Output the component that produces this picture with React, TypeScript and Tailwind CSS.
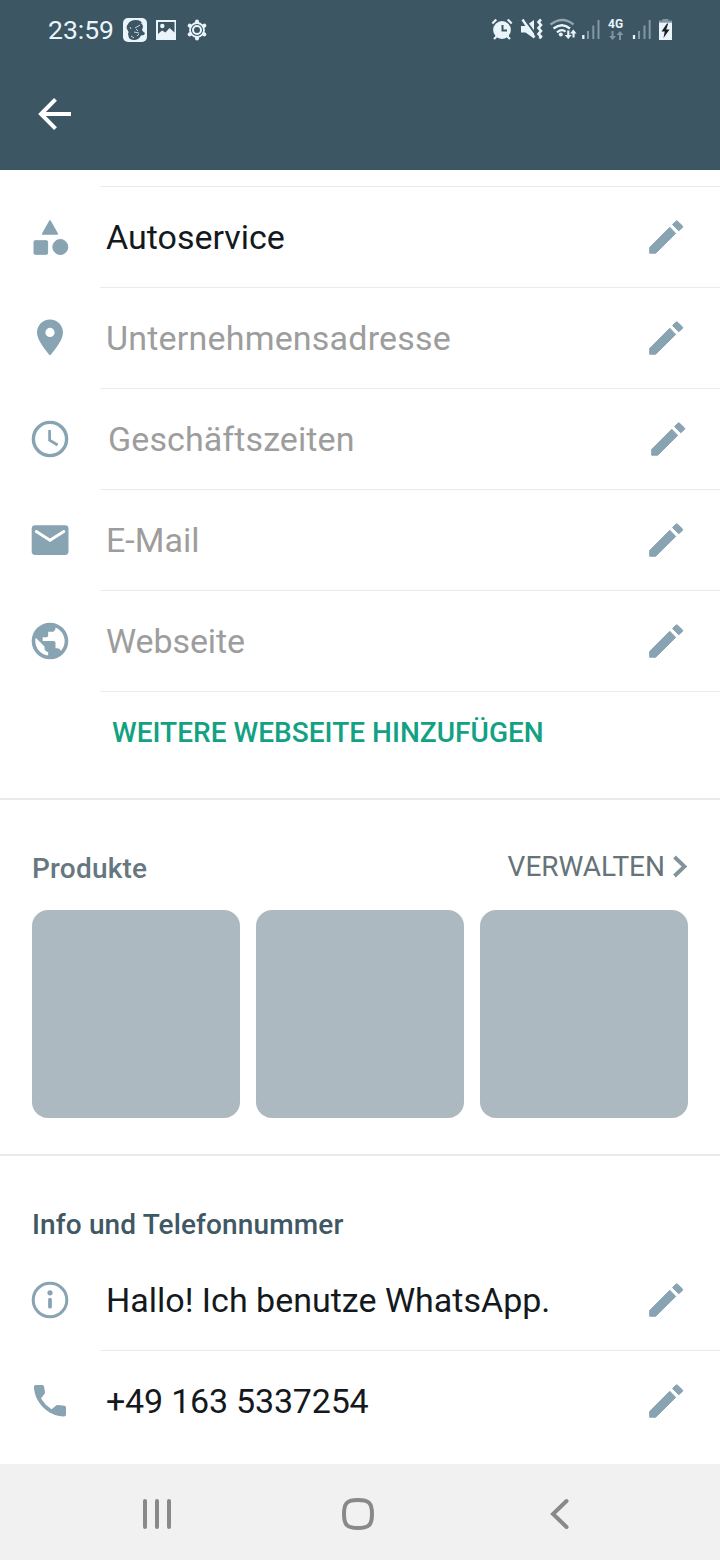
import type { ReactNode } from 'react'
import { MdPublic } from 'react-icons/md'

const ICON = 'text-[#88a3b2]'

function Pencil() {
  return (
    <svg width="40" height="40" viewBox="0 0 40 40" className={ICON} fill="currentColor" stroke="currentColor" strokeLinejoin="round">
      <path d="M3.7 30.5v5.7h6L29.7 16.4l-5.9-6.1z" />
      <path d="M26.6 7.6l3.2-3.3q.9-.9 1.8 0l4.7 4.5q.9.9 0 1.8l-3.6 3.2z" />
    </svg>
  )
}

function CategoryIcon() {
  return (
    <svg width="40" height="40" viewBox="0 0 40 40" className={ICON} fill="currentColor" stroke="currentColor" strokeLinejoin="round">
      <path d="M20 4l7.3 13H12.7z" strokeWidth="1.6" />
      <rect x="4" y="23.7" width="13.6" height="13.6" rx="1" />
      <circle cx="30.3" cy="30" r="7.5" />
    </svg>
  )
}

function PinIcon() {
  return (
    <svg width="40" height="40" viewBox="0 1 40 40" className={ICON} fill="currentColor">
      <path
        fillRule="evenodd"
        d="M20 2.4C12.7 2.4 7 8.1 7 15.4 7 23.5 15.8 33 18.8 37.2q1.2 1.7 2.4 0C24.2 33 33 23.5 33 15.4 33 8.1 27.3 2.4 20 2.4zm0 8.4a4.6 4.6 0 1 1 0 9.2 4.6 4.6 0 0 1 0-9.2z"
      />
    </svg>
  )
}

function ClockIcon() {
  return (
    <svg width="40" height="40" viewBox="0 0 40 40" className={ICON} fill="none" stroke="currentColor">
      <circle cx="20" cy="20" r="16.6" strokeWidth="3.4" />
      <path d="M19.6 11v10.2l8 4.8" strokeWidth="2.7" />
    </svg>
  )
}

function MailIcon() {
  return (
    <svg width="40" height="40" viewBox="0 0 40 40" className={ICON}>
      <rect x="1.7" y="5.3" width="36.8" height="29.6" rx="3.4" fill="currentColor" />
      <path d="M6.3 11.6L20 20.2l13.8-8.6" fill="none" stroke="#fff" strokeWidth="3" strokeLinecap="round" />
    </svg>
  )
}

function InfoIcon() {
  return (
    <svg width="40" height="40" viewBox="0 0 40 40" className={ICON} fill="none" stroke="currentColor">
      <circle cx="20" cy="20" r="16.8" strokeWidth="3" />
      <circle cx="20" cy="12.8" r="2.6" fill="currentColor" stroke="none" />
      <path d="M20 19.7v7" strokeWidth="3.8" strokeLinecap="round" />
    </svg>
  )
}

function PhoneIcon() {
  return (
    <svg width="40" height="40" viewBox="0 0 40 40" className={ICON} fill="currentColor">
      <path d="M5.8 4h6.5q1.6 0 1.8 1.8.5 3.8.9 5.1.2 1.2-.8 2.3l-3.3 4.2q4.3 6.7 10.7 10.8l4.2-3.5q.9-.9 2.3-.7l6.200.8q1.700.3 1.700 1.800v7q0 2-2 2C17.500 35.500 4 20 4 5.800 4 4 5.800 4 5.800 4z" />
    </svg>
  )
}

type RowProps = {
  icon: ReactNode
  label: string
  filled?: boolean
  shifted?: boolean
  border?: boolean
  tracking?: string
}

function Row({ icon, label, filled, shifted, border = true, tracking = '' }: RowProps) {
  return (
    <div className="flex h-[101px]">
      <div className="flex w-[100px] items-center justify-center">{icon}</div>
      <div
        className={`flex flex-1 items-center justify-between border-t ${border ? 'border-[#e9ebec]' : 'border-transparent'} ${
          shifted ? 'pl-2 pr-8' : 'pl-1.5 pr-[34px]'
        }`}
      >
        <span className={`whitespace-nowrap text-[34px] leading-10 ${filled ? 'text-[#13191d]' : 'text-[#9d9d9d]'} ${tracking}`}>
          {label}
        </span>
        <Pencil />
      </div>
    </div>
  )
}

function StatusBar() {
  return (
    <div className="flex h-[60px] items-center justify-between pl-12 pr-[46px] text-[#e9f5fb]">
      <div className="flex items-center">
        <span className="w-[75px] text-[26.5px] leading-[60px]">23:59</span>
        {/* chat head notification */}
        <svg width="24" height="24" viewBox="0 0 24 24" fill="currentColor">
          <rect width="24" height="24" rx="5" />
          <path
            d="M5 6q2-4 8-4 5 0 6.500 4l.5 3-1 3 1.500 2 1.500 1-1 2-3 .5q-2 4-6 4.500-4 .5-6-2l-1-4q1.500-2-.5-4-2-3 .5-6z"
            fill="#3c5664"
          />
          <path d="M12 10l5-3M11 14l5 1M8 18l3 2M13 11l2 2M18 5l2 2M7 9l1 2M14 18l2-2" stroke="currentColor" strokeWidth="1" opacity="0.8" />
        </svg>
        <svg width="20" height="20" viewBox="0 0 20 20" className="ml-[9px]" fill="currentColor">
          <path fillRule="evenodd" d="M0 0h20.5v20H0zM2 2v12l4-3.5 3.5 2 4-4.5 5 4.500V2z" />
          <circle cx="6.3" cy="6" r="2.2" />
        </svg>
        <svg width="20" height="22" viewBox="-10 -11 20 22" className="ml-[11px]" fill="none" stroke="currentColor">
          <circle r="7" strokeWidth="1.8" />
          <circle r="4" strokeWidth="2" />
          <g strokeWidth="4" strokeLinecap="round">
            <path d="M0-8.4v.4M0 8.4v-.4M7.3-4.4l-.3.2M7.3 4.4l-.3-.2M-7.3-4.4l.3.2M-7.3 4.4l.3-.2" />
          </g>
        </svg>
      </div>

      <svg width="184" height="30" viewBox="490 15 184 30">
        {/* alarm */}
        <circle cx="502" cy="30" r="8.9" fill="currentColor" />
        <path d="M492.3 23.5l4-4M511.7 23.5l-4-4M496.5 36.5l-2.5 2.5M507.5 36.5l2.5 2.5" stroke="currentColor" strokeWidth="2.2" />
        <path d="M502.5 25v5.5h4.5" fill="none" stroke="#3c5664" strokeWidth="2" />
        {/* muted, vibrating */}
        <path d="M521 26h4.5l8.5-6v18.5l-8.5-6H521z" fill="currentColor" />
        <path d="M524.5 19l11 15" stroke="#3c5664" strokeWidth="2" />
        <path d="M522.5 19.5l12 18" stroke="currentColor" strokeWidth="2.4" />
        <path d="M541 19.5l-2.5 2.5 2.5 3-2.5 3 2.5 3-2.5 3 2.5 2.5-1.5 2" fill="none" stroke="currentColor" strokeWidth="2.6" />
        {/* wifi */}
        <g fill="none" strokeWidth="2.3">
          <path d="M550.5 24.5q12-9 23 0" stroke="#93a4ae" />
          <path d="M553.5 28.5q8.5-6.5 16.5 0M557 32.3q5-4 8.5-.5" stroke="currentColor" />
        </g>
        <circle cx="560.8" cy="34.5" r="2" fill="currentColor" />
        <path d="M567.2 30.5v4.5h-2.5l3.5 4 3.5-4h-2.3v-4.5zM572.5 37.5v-4H570l3.3-4 3.3 4h-2v4z" fill="currentColor" />
        {/* signal, sim 1 */}
        <path d="M583.3 35v4" stroke="currentColor" strokeWidth="2.3" />
        <path d="M588 31v8M593.3 25.5V39M598.5 20v19" stroke="#8497a2" strokeWidth="2" />
        <text x="608" y="28" fontSize="12" fontWeight="700" fill="currentColor" letterSpacing="0.2">
          4G
        </text>
        <path d="M611.5 31v5H609l3.5 4 3.5-4h-2.5v-5zM619 40v-5h-2.5l3.5-4 3.5 4H621v5z" fill="#8195a0" />
        {/* signal, sim 2 */}
        <path d="M634 35v4" stroke="currentColor" strokeWidth="2.3" />
        <path d="M639 31v8M644.5 25.5V39M649.7 20v19" stroke="#8497a2" strokeWidth="2" />
        {/* battery */}
        <path d="M659 22.5v-2h3.5v-1.5h6v1.5h3.5v2z" fill="#8497a2" />
        <path d="M659 22.5h13V40h-13z" fill="currentColor" />
        <path d="M667 23.5l-5.5 8h3.2l-1.2 6.5 6-8.5h-3.3l2-6z" fill="#172026" />
      </svg>
    </div>
  )
}

function NavBar() {
  return (
    <nav className="h-24 bg-[#f1f1f1]">
      <svg width="720" height="96" viewBox="0 1464 720 96" fill="none" stroke="#898989" strokeWidth="4" strokeLinecap="round">
        <path d="M145 1501v26M157 1501v26M169 1501v26" />
        <path d="M358 1500c11 0 14 3 14 14s-3 14-14 14-14-3-14-14 3-14 14-14z" />
        <path d="M566.5 1501l-13.5 13 13.5 13" />
      </svg>
    </nav>
  )
}

const details: RowProps[] = [
  { icon: <CategoryIcon />, label: 'Autoservice', filled: true },
  { icon: <PinIcon />, label: 'Unternehmensadresse', tracking: 'tracking-[0.2px]' },
  { icon: <ClockIcon />, label: 'Geschäftszeiten', shifted: true, tracking: 'tracking-[0.1px]' },
  { icon: <MailIcon />, label: 'E-Mail' },
  { icon: <MdPublic size={44} className={ICON} />, label: 'Webseite', tracking: 'tracking-[-0.1px]' },
]

export default function App() {
  return (
    <div className="flex h-[1560px] w-[720px] flex-col overflow-hidden bg-white font-[Roboto,sans-serif]">
      <header className="h-[170px] bg-[#3c5664]">
        <StatusBar />
        <div className="flex h-[108px] items-center pl-[38px]">
          <svg width="34" height="34" viewBox="0 0 34 34" fill="none" stroke="#fff" strokeWidth="4">
            <path d="M33 17H3M17.5 2.3L3 17l14.5 14.7" />
          </svg>
        </div>
      </header>

      <section className="h-[630px] border-b-2 border-[#e8ebed] pt-4">
        {details.map(row => (
          <Row key={row.label} {...row} />
        ))}
        <div className="ml-[100px] border-t border-[#e9ebec] pl-3 pt-[21px]">
          <button className="block whitespace-nowrap text-[28px] font-medium leading-10 tracking-[0.03px] text-[#12a183]">
            WEITERE WEBSEITE HINZUFÜGEN
          </button>
        </div>
      </section>

      <section className="h-[356px] border-b-2 border-[#e8ebed] px-8">
        <div className="flex h-[110px] items-end justify-between pb-[21px]">
          <h2 className="text-[28px] font-medium leading-10 tracking-[0.2px] text-[#667781]">Produkte</h2>
          <button className="mb-0.5 flex items-center gap-[7px] text-[28px] leading-10 text-[#667378]">
            VERWALTEN
            <svg width="16" height="24" viewBox="0 0 16 24" fill="none" stroke="#81929d" strokeWidth="3.8">
              <path d="M2.5 2L12.5 11.5l-10 9.5" />
            </svg>
          </button>
        </div>
        <div className="grid grid-cols-3 gap-4">
          <div className="h-52 rounded-2xl bg-[#adb9c1]" />
          <div className="h-52 rounded-2xl bg-[#adb9c1]" />
          <div className="h-52 rounded-2xl bg-[#adb9c1]" />
        </div>
      </section>

      <section className="flex-1 pt-[49px]">
        <h2 className="h-11 pl-8 text-[28px] font-medium leading-10 tracking-[0.13px] text-[#3f5864]">
          Info und Telefonnummer
        </h2>
        <Row icon={<InfoIcon />} label="Hallo! Ich benutze WhatsApp." filled border={false} />
        <Row icon={<PhoneIcon />} label="+49 163 5337254" filled tracking="tracking-[-0.2px]" />
      </section>

      <NavBar />
    </div>
  )
}
